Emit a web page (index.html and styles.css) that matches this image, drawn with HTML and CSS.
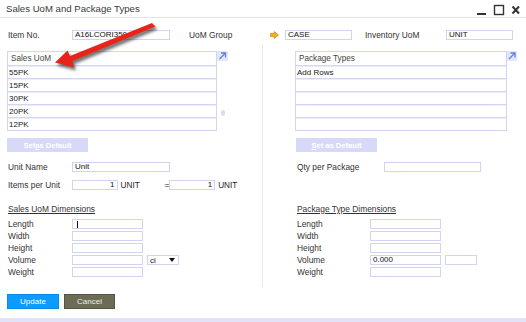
FILE: index.html
```html
<!doctype html>
<html lang="en">
<head>
	<meta charset="UTF-8">
	<title>Sales UoM and Package Types</title>
	<link rel="stylesheet" href="styles.css">
</head>
<body>
	<div class="window">
		<div class="titlebar">
			<div class="title">Sales UoM and Package Types</div>
			<div class="controls">
				<svg width="46" height="14" viewBox="0 0 46 14">
					<line x1="3" y1="12" x2="12" y2="12" stroke="#333" stroke-width="2"/>
					<rect x="20.5" y="3.5" width="9" height="9" fill="none" stroke="#333" stroke-width="1.4"/>
					<path d="M38.5 4.5 L45 11.5 M45 4.5 L38.5 11.5" stroke="#333" stroke-width="2"/>
				</svg>
			</div>
		</div>

		<div class="head-row">
			<span class="lbl lbl-item">Item No.</span>
			<div class="inp w98">A16LCORI350</div>
			<span class="lbl lbl-group">UoM Group</span>
			<svg class="link-arrow" width="9" height="8" viewBox="0 0 9 8">
				<path d="M0.5 2.3 H4.2 V0.5 L8.5 4 L4.2 7.5 V5.7 H0.5 Z" fill="#f2b01e" stroke="#b8840a" stroke-width="0.6"/>
			</svg>
			<div class="inp w67">CASE</div>
			<span class="lbl lbl-inv">Inventory UoM</span>
			<div class="inp w67">UNIT</div>
		</div>

		<div class="cols">
			<div class="col col-left">
				<div class="grid-wrap">
					<div class="grid w208">
						<div class="grid-head">Sales UoM</div>
						<div class="grid-row">55PK</div>
						<div class="grid-row">15PK</div>
						<div class="grid-row">30PK</div>
						<div class="grid-row">20PK</div>
						<div class="grid-row">12PK</div>
					</div>
					<div class="gutter">
						<svg class="expand" width="11" height="10" viewBox="0 0 11 10">
							<rect width="11" height="10" fill="#e4e6fa"/>
							<path d="M2.5 8 L8.5 2 M4 2 H8.5 V6.5" fill="none" stroke="#5a86d8" stroke-width="1.3"/>
						</svg>
						<div class="scroll-dot"></div>
					</div>
				</div>
				<div class="btn-default">Set <u>a</u>s Default</div>
				<div class="row">
					<span class="lbl w64">Unit Name</span>
					<div class="inp w98">Unit</div>
				</div>
				<div class="row row-items">
					<span class="lbl w64">Items per Unit</span>
					<div class="inp w46 num">1</div>
					<span class="unit">UNIT</span>
					<span class="eq">=</span>
					<div class="inp w46 num">1</div>
					<span class="unit">UNIT</span>
				</div>
				<div class="dims-title">Sales UoM Dimensions</div>
				<div class="row dim"><span class="lbl w64">Length</span><div class="inp w71"><span class="caret"></span></div></div>
				<div class="row dim"><span class="lbl w64">Width</span><div class="inp w71"></div></div>
				<div class="row dim"><span class="lbl w64">Height</span><div class="inp w71"></div></div>
				<div class="row dim"><span class="lbl w64">Volume</span><div class="inp w71"></div>
					<div class="select">ci<span class="tri"></span></div>
				</div>
				<div class="row dim"><span class="lbl w64">Weight</span><div class="inp w71"></div></div>
			</div>

			<div class="col col-right">
				<div class="grid-wrap">
					<div class="grid w210">
						<div class="grid-head">Package Types</div>
						<div class="grid-row">Add Rows</div>
						<div class="grid-row"></div>
						<div class="grid-row"></div>
						<div class="grid-row"></div>
						<div class="grid-row"></div>
					</div>
					<div class="gutter">
						<svg class="expand" width="10" height="10" viewBox="0 0 10 10">
							<rect width="10" height="10" fill="#e4e6fa"/>
							<path d="M2 8 L8 2 M3.5 2 H8 V6.5" fill="none" stroke="#5a86d8" stroke-width="1.3"/>
						</svg>
					</div>
				</div>
				<div class="btn-default"><u>S</u>et as Default</div>
				<div class="row">
					<span class="lbl w87">Qty per Package</span>
					<div class="inp w97"></div>
				</div>
				<div class="row row-items"></div>
				<div class="dims-title">Package Type Dimensions</div>
				<div class="row dim"><span class="lbl w73">Length</span><div class="inp w71"></div></div>
				<div class="row dim"><span class="lbl w73">Width</span><div class="inp w71"></div></div>
				<div class="row dim"><span class="lbl w73">Height</span><div class="inp w71"></div></div>
				<div class="row dim"><span class="lbl w73">Volume</span><div class="inp w71">0.000</div>
					<div class="inp w32 extra"></div>
				</div>
				<div class="row dim"><span class="lbl w73">Weight</span><div class="inp w71"></div></div>
			</div>
		</div>

		<div class="footer">
			<div class="btn btn-update">Update</div>
			<div class="btn btn-cancel">Cancel</div>
		</div>
		<div class="bottom-bar"></div>
	</div>

	<svg class="callout" width="526" height="322" viewBox="0 0 526 322">
		<polygon class="callout-arrow" points="152,23 155.5,26.5 72.5,61 74,67.5 55,62.5 67.5,50.5 70,56" fill="#e8231a"/>
	</svg>
</body>
</html>
```

FILE: styles.css
```css
body,html{margin: 0;padding: 0;}
body{width: 526px;height: 322px;overflow: hidden;background: #fff;position: relative;font-family: "Liberation Sans", Arial, sans-serif;color: #333;}
.window{display: flex;flex-direction: column;}

.titlebar{height: 17px;border-bottom: 1px solid #e2e2f0;display: flex;align-items: center;justify-content: space-between;}
.title{font-size: 9.6px;padding-left: 6px;color: #3a3a3a;margin-top: -1px;}
.controls{padding-right: 6px;display: flex;align-items: center;margin-top: 1px;}
.controls svg{display: block;}

.lbl{font-size: 8.4px;color: #333;white-space: nowrap;}
.inp{height: 10px;box-sizing: border-box;border: 1px solid #d2d2f2;font-size: 8px;line-height: 8px;padding-left: 2px;color: #111;white-space: nowrap;display: flex;align-items: center;}
.num{justify-content: flex-end;padding-right: 2px;}
.w32{width: 32px;}
.w46{width: 46px;}
.w64{width: 64px;}
.w67{width: 67px;}
.w71{width: 71px;}
.w73{width: 73px;}
.w87{width: 87px;}
.w97{width: 97px;}
.w98{width: 98px;}

.head-row{display: flex;align-items: center;height: 10px;margin-top: 12px;padding-left: 8px;}
.lbl-item{width: 64px;}
.lbl-group{margin-left: 19px;width: 81px;}
.link-arrow{display: block;margin-right: 6px;}
.lbl-inv{margin-left: 13px;width: 81px;}

.cols{display: grid;grid-template-columns: 263px 1fr;margin-top: 5px;}
.col{display: flex;flex-direction: column;padding-top: 6px;padding-bottom: 10px;}
.col-left{padding-left: 7px;border-right: 1px solid #e8e8ee;}
.col-right{padding-left: 32px;}

.grid-wrap{display: flex;}
.w208{width: 208px;}
.w210{width: 210px;}
.grid{border: 1px solid #d4d4f4;border-bottom: none;}
.grid-head{height: 14px;box-sizing: border-box;border-bottom: 1px solid #d4d4f4;font-size: 8.2px;color: #444;padding-left: 3px;display: flex;align-items: center;}
.grid-row{height: 13px;box-sizing: border-box;border-bottom: 1px solid #d4d4f4;border-top: 1px solid #ececfb;font-size: 8px;color: #1a1a1a;padding-left: 1px;display: flex;align-items: center;}
.gutter{display: flex;flex-direction: column;align-items: flex-start;}
.expand{display: block;}
.scroll-dot{width: 4px;height: 6px;border-radius: 2px;background: #dcdcf4;margin-top: 49px;margin-left: 4px;}

.btn-default{width: 81px;height: 14px;margin-top: 7px;background: #d8d8f8;color: #fff;font-size: 7.6px;font-weight: bold;display: flex;align-items: center;justify-content: center;}
.col-right .btn-default{margin-left: 1px;}

.row{display: flex;align-items: center;height: 10px;margin-top: 10px;padding-left: 1px;}
.col-right .row{padding-left: 2px;}
.row-items{margin-top: 8px;}
.unit{font-size: 8.2px;color: #222;margin-left: 3px;width: 44px;}
.eq{font-size: 8.4px;color: #222;width: 5px;}

.dims-title{font-size: 8.4px;color: #333;text-decoration: underline;margin-top: 14px;padding-left: 1px;height: 11px;}
.col-right .dims-title{padding-left: 2px;}
.row.dim{margin-top: 2px;}
.dims-title + .dim{margin-top: 4px;}
.caret{width: 1px;height: 7px;background: #111;margin-left: 2px;}
.select{width: 32px;height: 10px;box-sizing: border-box;border: 1px solid #d2d2f2;margin-left: 4px;font-size: 8px;padding-left: 2px;display: flex;align-items: center;justify-content: space-between;color: #111;}
.tri{width: 0;height: 0;border-left: 3px solid transparent;border-right: 3px solid transparent;border-top: 4px solid #111;margin-right: 3px;}
.extra{margin-left: 4px;}

.footer{display: flex;gap: 5px;padding-left: 7px;margin-top: 7px;}
.btn{height: 15px;width: 52px;box-sizing: border-box;font-size: 8px;color: #fff;display: flex;align-items: center;justify-content: center;}
.btn-update{background: #0c9bff;border: 1px solid #0a8ae8;}
.btn-cancel{background: #6c6c55;border: 1px solid #55554a;width: 51px;color: #eee;}
.bottom-bar{height: 5px;background: #e2e2f8;margin-top: 9px;}

.callout{position: absolute;top: 0;left: 0;pointer-events: none;}
.callout-arrow{filter: drop-shadow(2px 3px 1.5px rgba(0,0,0,0.55));}
```
